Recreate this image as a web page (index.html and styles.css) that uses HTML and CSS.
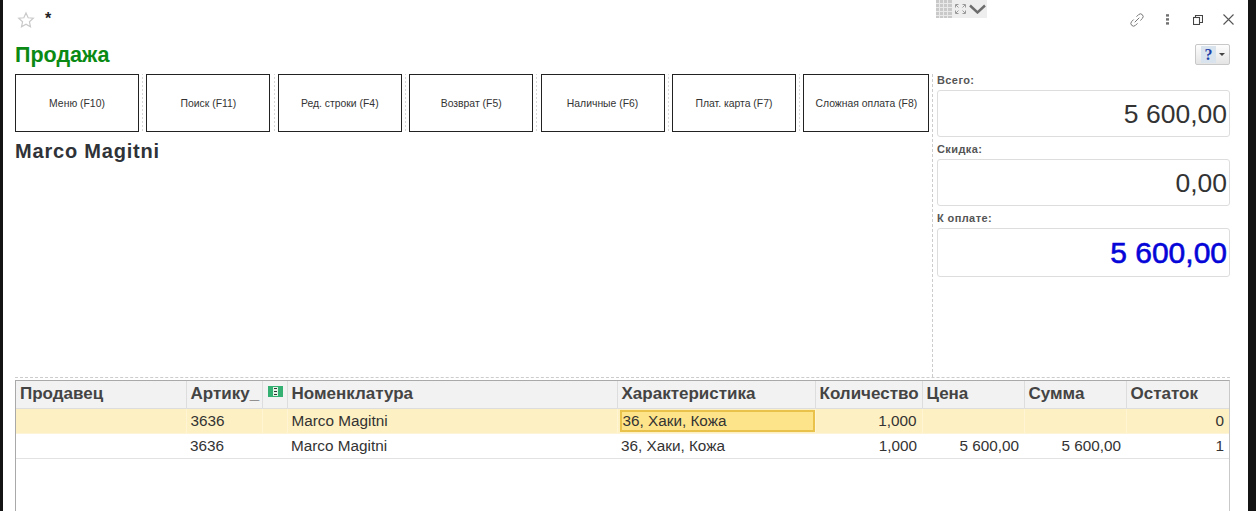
FILE: index.html
```html
<!DOCTYPE html>
<html lang="ru">
<head>
<meta charset="utf-8">
<title>Продажа</title>
<link rel="stylesheet" href="styles.css">
</head>
<body>
<div class="window">
  <header class="topbar">
    <svg class="star" width="18" height="18" viewBox="0 0 20 20"><path d="M10 2.200l2.400 5.300 5.700.6-4.300 3.800 1.200 5.700L10 14.700l-5 2.900 1.200-5.700L1.900 8.100l5.700-.6z" fill="#fff" stroke="#c9c9c9" stroke-width="1.300"/></svg>
    <span class="star-mark">*</span>
    <div class="spacer"></div>
    <div class="win-icons">
      <svg class="ic-link" width="16" height="16" viewBox="0 0 16 16" fill="none" stroke="#777" stroke-width="1" stroke-linecap="round"><path d="M6 10l4-4"/><path d="M7.800 4.400l1.900-1.900a2.700 2.700 0 0 1 3.800 3.800l-1.900 1.900"/><path d="M8.200 11.600l-1.900 1.900a2.700 2.700 0 0 1-3.800-3.800l1.900-1.900"/></svg>
      <svg class="ic-dots" width="3" height="11" viewBox="0 0 3 11" fill="#707070"><rect width="3" height="2.400" y="0.200"/><rect width="3" height="2.400" y="4.200"/><rect width="3" height="2.400" y="8.200"/></svg>
      <svg class="ic-restore" width="10" height="10" viewBox="0 0 10 10" fill="none" stroke="#444" stroke-width="1.100"><rect x="0.500" y="2.500" width="6" height="7"/><path d="M2.500 2.500v-2h7v7h-3"/></svg>
      <svg class="ic-close" width="11" height="11" viewBox="0 0 11 11" fill="none" stroke="#555" stroke-width="1.100"><path d="M.5.500l10 10M10.500.500l-10 10"/></svg>
    </div>
  </header>

  <div class="mini-tools">
    <svg width="16" height="18" viewBox="0 0 16 18"><path fill="#c9c9c9" d="M0 0h16v18H0z"/><path stroke="#e9e9e9" d="M3.500 0v18M7.500 0v18M11.500 0v18M0 3.500h16M0 7.500h16M0 11.500h16M0 15.500h16"/></svg>
    <svg class="mini-expand" width="11" height="10" viewBox="0 0 11 10" fill="none" stroke="#999"><path d="M.5 3.500v-3h3M7.500.500h3v3M.5 6.500v3h3M10.500 6.500v3h-3M1 1l2.500 2.500M10 1L7.500 3.500M1 9l2.500-2.500M10 9L7.500 6.500"/></svg>
    <svg class="mini-chev" width="17" height="10" viewBox="0 0 17 10" fill="none" stroke="#6d6d6d" stroke-width="2.400"><path d="M1 1.500L8.500 8.500 16 1.500"/></svg>
  </div>

  <div class="title-row">
    <h1 class="title">Продажа</h1>
    <button class="help" type="button">
      <span class="help-q">?</span>
      <span class="help-caret"></span>
    </button>
  </div>

  <div class="main">
    <div class="left">
      <div class="buttons">
        <div class="cmd">Меню (F10)</div><i class="sep"></i>
        <div class="cmd">Поиск (F11)</div><i class="sep"></i>
        <div class="cmd">Ред. строки (F4)</div><i class="sep"></i>
        <div class="cmd">Возврат (F5)</div><i class="sep"></i>
        <div class="cmd">Наличные (F6)</div><i class="sep"></i>
        <div class="cmd">Плат. карта (F7)</div><i class="sep"></i>
        <div class="cmd cmd-wide">Сложная оплата (F8)</div>
      </div>
      <div class="product">Marco Magitni</div>
    </div>
    <aside class="totals">
      <div class="label">Всего:</div>
      <div class="field">5 600,00</div>
      <div class="label">Скидка:</div>
      <div class="field">0,00</div>
      <div class="label">К оплате:</div>
      <div class="field field-pay">5 600,00</div>
    </aside>
  </div>

  <div class="table-wrap">
    <table class="grid">
      <colgroup>
        <col class="c-seller"><col class="c-art"><col class="c-flag"><col class="c-name"><col class="c-char"><col class="c-qty"><col class="c-price"><col class="c-sum"><col class="c-rest">
      </colgroup>
      <thead>
        <tr>
          <th>Продавец</th><th>Артику_</th>
          <th class="flag-h"><svg width="15" height="11" viewBox="0 0 15 11"><rect width="15" height="11" fill="#34b073"/><rect x="5" y="1" width="5" height="9" fill="#e3f3e8"/><path d="M6 2.500h3M6 5.500h3M6 8.500h3" stroke="#333" stroke-width="1.200"/></svg></th>
          <th>Номенклатура</th><th>Характеристика</th><th>Количество</th><th>Цена</th><th>Сумма</th><th>Остаток</th>
        </tr>
      </thead>
      <tbody>
        <tr class="current">
          <td></td><td>3636</td><td></td><td>Marco Magitni</td><td class="active"><span class="active-box">36, Хаки, Кожа</span></td><td class="num">1,000</td><td class="num"></td><td class="num"></td><td class="num">0</td>
        </tr>
        <tr>
          <td></td><td>3636</td><td></td><td>Marco Magitni</td><td>36, Хаки, Кожа</td><td class="num">1,000</td><td class="num">5 600,00</td><td class="num">5 600,00</td><td class="num">1</td>
        </tr>
      </tbody>
    </table>
  </div>
</div>
</body>
</html>
```
FILE: styles.css
```css
* { box-sizing: border-box; }
html, body { margin: 0; height: 100%; }
body {
  background: #141414;
  padding: 0 8px 0 3px;
  font-family: "Liberation Sans", Arial, sans-serif;
  overflow: hidden;
}
.window {
  position: relative;
  height: 511px;
  background: #fff;
  padding: 0 18px 0 12px;
  overflow: hidden;
}
.topbar {
  display: flex;
  align-items: center;
  height: 39px;
}
.star { margin-left: 2px; }
.star-mark { margin-left: 10px; font-size: 16px; font-weight: bold; color: #222; align-self: flex-start; padding-top: 10px; }
.spacer { flex: 1; }
.win-icons {
  display: flex;
  align-items: center;
  margin-right: -4px;
}
.ic-dots { margin-left: 21px; }
.ic-restore { margin-left: 24px; }
.ic-close { margin-left: 20px; }
.mini-tools {
  position: absolute;
  left: 933px;
  top: 0;
  width: 51px;
  height: 18px;
  background: #eee;
  display: flex;
  align-items: center;
}
.mini-tools svg { flex: none; }
.mini-expand { margin-left: 3px; }
.mini-chev { margin-left: 3px; }
.title-row {
  display: flex;
  justify-content: space-between;
  align-items: center;
  height: 35px;
  padding-bottom: 4px;
}
.title {
  margin: 0;
  font-size: 21.500px;
  font-weight: bold;
  color: #0a8a14;
  line-height: 30px;
}
.help {
  width: 35px;
  height: 21px;
  padding: 0 4px 0 5px;
  background: linear-gradient(#fdfdfd, #e4e4e4);
  border: 1px solid #c8c8c8;
  border-radius: 2px;
  display: flex;
  align-items: center;
  justify-content: space-between;
}
.help-q {
  width: 15px;
  background: #d9e3ee;
  color: #1c3fa8;
  font: bold 16px/17px "Liberation Serif", serif;
  text-align: center;
}
.help-caret {
  border: 3px solid transparent;
  border-top: 3px solid #444;
  border-bottom: 0;
}
.main {
  display: flex;
  height: 304px;
  border-bottom: 1px dashed #ccc;
}
.left { width: 916px; flex: none; }
.buttons { display: flex; align-items: stretch; height: 58px; }
.cmd {
  width: 124px;
  flex: none;
  display: flex;
  align-items: center;
  justify-content: center;
  border: 1px solid #222;
  font-size: 10.400px;
  color: #333;
}
.cmd-wide { width: 126px; }
.sep {
  width: 7.400px;
  flex: none;
  background: linear-gradient(#d6d6d6 50%, transparent 50%) center / 1px 4px repeat-y;
}
.product {
  margin-top: 8px;
  font-size: 20px;
  letter-spacing: .8px;
  font-weight: bold;
  color: #2f3338;
  line-height: 23px;
}
.totals {
  flex: 1;
  padding-left: 4px;
  margin-left: 1px;
  border-left: 1px dashed #ccc;
}
.label {
  height: 17px;
  line-height: 15px;
  font-size: 11px;
  font-weight: bold;
  color: #555;
  letter-spacing: .4px;
}
.label:first-child { height: 16px; line-height: 13px; }
.field {
  height: 47px;
  margin-bottom: 5px;
  padding-right: 2px;
  border: 1px solid #ddd;
  border-radius: 3px;
  text-align: right;
  font-size: 26.500px;
  line-height: 47px;
  color: #333;
}
.field-pay {
  height: 49px;
  margin-bottom: 0;
  color: #0505d8;
  font-size: 30px;
  line-height: 48px;
  -webkit-text-stroke: .6px #0505d8;
}
.table-wrap {
  margin-top: 2px;
  height: 131px;
  border: 1px solid #a9a9a9;
  border-bottom: 0;
  border-right-color: #c9c9c9;
}
.grid {
  border-collapse: collapse;
  table-layout: fixed;
  width: 1213px;
  font-size: 15.300px;
  color: #333;
}
.c-seller { width: 170px; }
.c-art { width: 76px; }
.c-flag { width: 25px; }
.c-name { width: 330px; }
.c-char { width: 198px; }
.c-qty { width: 107px; }
.c-price { width: 102px; }
.c-sum { width: 102px; }
.c-rest { width: 103px; }
.grid th {
  height: 27px;
  padding: 0 4px;
  background: #f2f2f2;
  border-right: 1px solid #ddd;
  border-bottom: 1px solid #ddd;
  font-size: 17px;
  font-weight: bold;
  color: #444;
  text-align: left;
  white-space: nowrap;
  overflow: hidden;
}
.grid th:last-child, .grid td:last-child { border-right: 0; }
.grid .flag-h { padding: 0; }
.flag-h svg { display: block; margin: -5px 0 0 5px; }
.grid td {
  height: 25px;
  padding: 0 5px 0 4px;
  border-bottom: 1px solid #e2e2e2;
  white-space: nowrap;
}
.grid .num { text-align: right; }
.current td {
  background: #fdf0c2;
  border-right: 1px solid #fff4d4;
  border-bottom-color: #fdf4d8;
}
.grid .active { padding: 1px 0 1px 2px; }
.active-box {
  display: block;
  height: 22px;
  padding-left: 1px;
  line-height: 18px;
  background: #fde38a;
  border: 2px solid #e8c24a;
}
```
